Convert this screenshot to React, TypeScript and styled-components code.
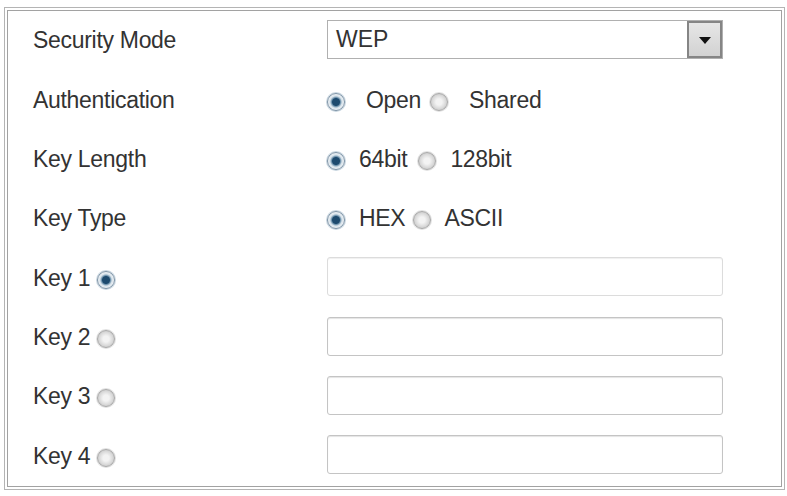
import React from 'react';
import styled, { createGlobalStyle } from 'styled-components';

const GlobalStyle = createGlobalStyle`
  html, body {
    margin: 0;
    padding: 0;
    background: #ffffff;
  }
  body {
    font-family: "Liberation Sans", Arial, sans-serif;
    color: #333333;
  }
`;

const Frame = styled.div`
  box-sizing: border-box;
  width: 781px;
  height: 483px;
  margin: 7px 0 0 4px;
  padding: 2px;
  border: 1px solid #b4b4b4;
`;

const Panel = styled.div`
  box-sizing: border-box;
  height: 100%;
  border: 1px solid #a2a2a2;
  padding-left: 25px;
  display: grid;
  grid-template-columns: 294px 396px;
  grid-template-rows: repeat(8, 1fr);
  align-items: center;
`;

const Label = styled.div`
  display: flex;
  align-items: center;
  font-size: 23px;
  letter-spacing: -0.3px;
  color: #333;
`;

const Control = styled.div`
  display: flex;
  align-items: center;
`;

const Select = styled.div`
  box-sizing: border-box;
  width: 396px;
  height: 39px;
  margin-top: -2px;
  border: 1px solid #b0b0b0;
  display: flex;
  align-items: stretch;
  background: #fff;
`;

const SelectValue = styled.div`
  flex: 1;
  display: flex;
  align-items: center;
  padding-left: 8px;
  font-size: 23px;
  color: #333;
`;

const SelectButton = styled.div`
  box-sizing: border-box;
  width: 35px;
  border: 2px solid #858585;
  background: linear-gradient(#e6e6e6, #d2d2d2);
  display: flex;
  align-items: center;
  justify-content: center;
`;

const Arrow = styled.div`
  width: 0;
  height: 0;
  border-left: 6px solid transparent;
  border-right: 6px solid transparent;
  border-top: 7px solid #111;
  margin-top: 2px;
`;

const Radio = styled.span<{ $checked?: boolean }>`
  box-sizing: border-box;
  display: inline-block;
  flex: none;
  width: 18px;
  height: 18px;
  border-radius: 50%;
  border: 1px solid ${(p) => (p.$checked ? '#7d93a6' : '#a9a9a9')};
  box-shadow: 0 0 0 1px ${(p) => (p.$checked ? '#c9d6e0' : '#e2e2e2')};
  background: ${(p) =>
    p.$checked
      ? 'radial-gradient(circle, #1d4a6e 0 3.5px, #6f93ad 4.5px, #d7e2ea 6px, #eef2f5 8px)'
      : 'radial-gradient(circle, #f3f3f3 0 3px, #dedede 6px, #cfcfcf 8px)'};
  margin-top: 3px;
`;

const OptionText = styled.span<{ $lead: number; $trail: number }>`
  font-size: 23px;
  letter-spacing: -0.3px;
  color: #333;
  margin-left: ${(p) => p.$lead}px;
  margin-right: ${(p) => p.$trail}px;
`;

const TextBox = styled.div<{ $faint?: boolean }>`
  box-sizing: border-box;
  width: 396px;
  height: 39px;
  margin-top: -3px;
  border: 1px solid ${(p) => (p.$faint ? '#dcdcdc' : '#c4c4c4')};
  border-radius: 3px;
  box-shadow: inset 0 1px 1px ${(p) => (p.$faint ? '#f0f0f0' : '#e4e4e4')};
  background: #fff;
`;

const KeyRadio = styled(Radio)`
  margin-left: 7px;
`;

type Opt = { text: string; checked?: boolean; lead: number; trail: number };

function RadioGroup({ options }: { options: Opt[] }) {
  return (
    <Control>
      {options.map((o) => (
        <React.Fragment key={o.text}>
          <Radio $checked={o.checked} />
          <OptionText $lead={o.lead} $trail={o.trail}>
            {o.text}
          </OptionText>
        </React.Fragment>
      ))}
    </Control>
  );
}

export default function App() {
  const keys = [1, 2, 3, 4];
  return (
    <>
      <GlobalStyle />
      <Frame>
        <Panel>
          <Label>Security Mode</Label>
          <Control>
            <Select>
              <SelectValue>WEP</SelectValue>
              <SelectButton>
                <Arrow />
              </SelectButton>
            </Select>
          </Control>

          <Label>Authentication</Label>
          <RadioGroup
            options={[
              { text: 'Open', checked: true, lead: 21, trail: 9 },
              { text: 'Shared', lead: 21, trail: 0 },
            ]}
          />

          <Label>Key Length</Label>
          <RadioGroup
            options={[
              { text: '64bit', checked: true, lead: 14, trail: 11 },
              { text: '128bit', lead: 14, trail: 0 },
            ]}
          />

          <Label>Key Type</Label>
          <RadioGroup
            options={[
              { text: 'HEX', checked: true, lead: 14, trail: 8 },
              { text: 'ASCII', lead: 13, trail: 0 },
            ]}
          />

          {keys.map((k) => (
            <React.Fragment key={k}>
              <Label>
                Key {k}
                <KeyRadio $checked={k === 1} />
              </Label>
              <Control>
                <TextBox $faint={k === 1} />
              </Control>
            </React.Fragment>
          ))}
        </Panel>
      </Frame>
    </>
  );
}
